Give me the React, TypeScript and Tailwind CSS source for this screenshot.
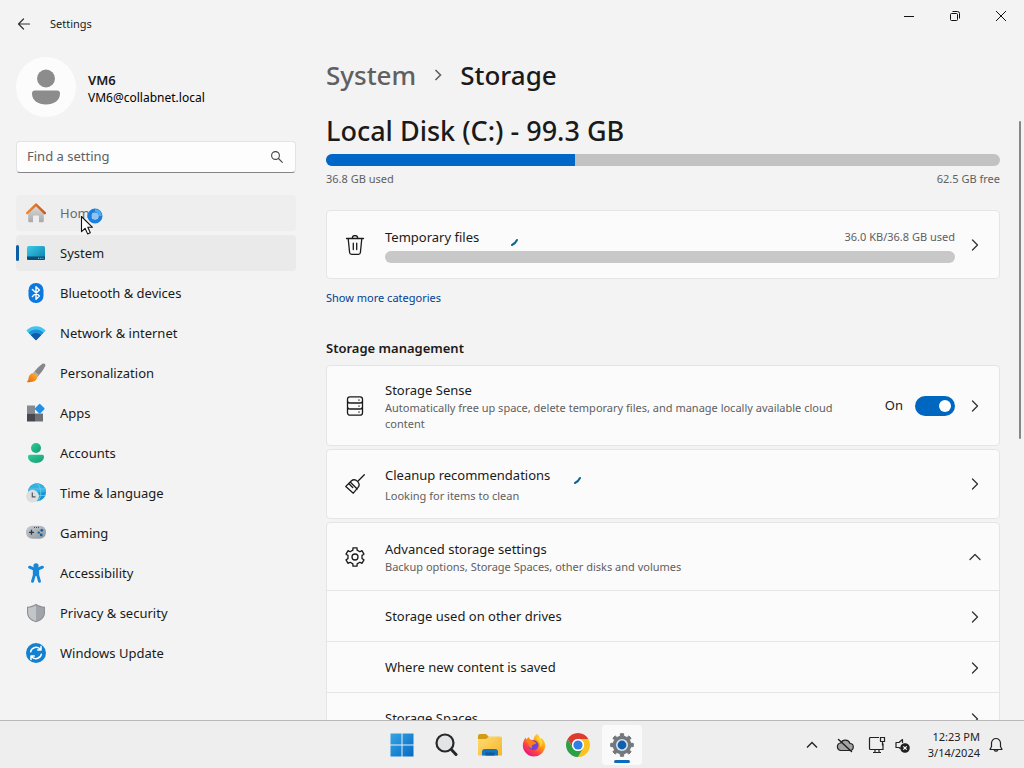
import type { ReactNode } from 'react'

// Closed outline of a cog wheel, one tooth pointing straight up
function gearPath(teeth: number, outer: number, inner: number, spread: number) {
  const step = (Math.PI * 2) / teeth
  const points: string[] = []
  const at = (r: number, a: number) =>
    `${(12 + r * Math.sin(a)).toFixed(2)} ${(12 - r * Math.cos(a)).toFixed(2)}`
  for (let i = 0; i < teeth; i++) {
    const a = i * step
    points.push(
      at(inner, a - step * spread * 1.35),
      at(outer, a - step * spread),
      at(outer, a + step * spread),
      at(inner, a + step * spread * 1.35),
    )
  }
  return `M${points.join('L')}Z`
}

/* ========== NAV ICONS ========== */

function HomeIcon() {
  return (
    <svg viewBox="0 0 20 20" className="size-5">
      <defs>
        <linearGradient id="home-wall" x1="0" y1="0" x2="0" y2="1">
          <stop offset="0" stopColor="#dedede" />
          <stop offset="1" stopColor="#a9a9a9" />
        </linearGradient>
        <linearGradient id="home-roof" x1="0" y1="0" x2="1" y2="0">
          <stop offset="0" stopColor="#f08a2c" />
          <stop offset="1" stopColor="#c8561b" />
        </linearGradient>
      </defs>
      <path
        d="M10 2 2.2 9.4V18a1.2 1.2 0 0 0 1.2 1.2H7V13.5a1 1 0 0 1 1-1h4a1 1 0 0 1 1 1v5.7h3.6a1.2 1.2 0 0 0 1.2-1.2V9.4Z"
        fill="url(#home-wall)"
      />
      <path
        d="M1.2 10.2 10 1.6l8.8 8.6"
        fill="none"
        stroke="url(#home-roof)"
        strokeWidth="2.4"
        strokeLinecap="round"
        strokeLinejoin="round"
      />
    </svg>
  )
}

function SystemIcon() {
  return (
    <svg viewBox="0 0 20 20" className="size-5">
      <defs>
        <linearGradient id="system-screen" x1="0" y1="0" x2="1" y2="1">
          <stop offset="0" stopColor="#3ccbe8" />
          <stop offset="1" stopColor="#0a7fae" />
        </linearGradient>
      </defs>
      <rect x="1" y="3" width="18" height="14" rx="1.6" fill="url(#system-screen)" />
      <path d="M1 13.6h18v1.8a1.6 1.6 0 0 1-1.6 1.6H2.6A1.6 1.6 0 0 1 1 15.4Z" fill="#0b4f78" />
      <path d="M12 15.3h1.2M14.2 15.3h1.2M16.4 15.3h1" stroke="#9adcf0" strokeWidth="0.9" />
    </svg>
  )
}

function BluetoothIcon() {
  return (
    <svg viewBox="0 0 20 20" className="size-5">
      <rect x="2.5" y="0" width="15" height="20" rx="7.2" fill="#0c78e0" />
      <path
        d="m6.4 6.6 7 6.5-3.4 3.2V3.7l3.4 3.2-7 6.5"
        fill="none"
        stroke="#fff"
        strokeWidth="1.4"
        strokeLinejoin="round"
        strokeLinecap="round"
      />
    </svg>
  )
}

function NetworkIcon() {
  return (
    <svg viewBox="0 0 20 20" className="size-5">
      <defs>
        <clipPath id="wifi-fan">
          <path d="M.3 7.5C5.8 1.8 14.2 1.8 19.7 7.5L10.6 16.8a.8.8 0 0 1-1.2 0Z" />
        </clipPath>
      </defs>
      <g clipPath="url(#wifi-fan)">
        <rect width="20" height="20" fill="#41c4ef" />
        <circle cx="10" cy="17" r="10.5" fill="#1b93dc" />
        <circle cx="10" cy="17" r="7" fill="#1259a8" />
      </g>
    </svg>
  )
}

function BrushIcon() {
  return (
    <svg viewBox="0 0 20 20" className="size-5">
      <defs>
        <linearGradient id="brush-tip" x1="1" y1="0" x2="0" y2="1">
          <stop offset="0" stopColor="#ffb53a" />
          <stop offset="1" stopColor="#e2640c" />
        </linearGradient>
      </defs>
      <path d="M16.4.8c1.5-1 3.6.5 2.8 2.3-1.7 3.8-4.4 7.3-7.6 10.6L7.4 9.9C10.3 6.2 13 3.3 16.4.8Z" fill="#85878c" />
      <path d="m8.8 8.3 4.3 3.7-1.9 2-4.2-3.8Z" fill="#a9abb0" />
      <path d="M7.2 10c2.1-.3 4.500 2.200 4.100 4.300C10.700 18 6 20 .6 19c1.600-1 1.700-2.200 2-4.200.4-2.600 2.300-4.600 4.600-4.800Z" fill="url(#brush-tip)" />
    </svg>
  )
}

function AppsIcon() {
  return (
    <svg viewBox="0 0 20 20" className="size-5">
      <path d="M1 2.5h8v8H1z" fill="#858a8f" />
      <path d="M1 10.5h8v8H1z" fill="#45484c" />
      <path d="M9 10.5h8v8H9z" fill="#6c7176" />
      <rect x="10" y="2" width="7.4" height="7.4" rx="1" transform="rotate(45 13.7 5.7)" fill="#1f8fe8" />
    </svg>
  )
}

function AccountsIcon() {
  return (
    <svg viewBox="0 0 20 20" className="size-5">
      <defs>
        <linearGradient id="account-green" x1="0" y1="0" x2="1" y2="1">
          <stop offset="0" stopColor="#2ecf98" />
          <stop offset="1" stopColor="#169a72" />
        </linearGradient>
      </defs>
      <circle cx="10" cy="5" r="5" fill="url(#account-green)" />
      <path d="M3.8 11.8h12.4A1.8 1.8 0 0 1 18 13.600C18 17.500 14.500 20 10 20s-8-2.500-8-6.400a1.800 1.800 0 0 1 1.800-1.800Z" fill="url(#account-green)" />
    </svg>
  )
}

function TimeIcon() {
  return (
    <svg viewBox="0 0 20 20" className="size-5">
      <circle cx="11" cy="9.2" r="9" fill="#1797cf" />
      <path d="M11 .2a9 9 0 0 1 9 9H3C3 4 6.5.2 11 .2Z" fill="#35b3e0" />
      <path d="M11 .2c4.5 4 5 13 1 18M2.500 6h17M3 12.500h16.300" fill="none" stroke="#77d3ef" strokeWidth="0.7" />
      <circle cx="6.5" cy="13.2" r="6.4" fill="#dcdfe2" />
      <path d="M6.3 9.6v4.200h3.200" fill="none" stroke="#53585d" strokeWidth="1.2" />
    </svg>
  )
}

function GamingIcon() {
  return (
    <svg viewBox="0 0 20 20" className="size-5">
      <defs>
        <linearGradient id="pad-body" x1="0" y1="0" x2="1" y2="1">
          <stop offset="0" stopColor="#c7ccd1" />
          <stop offset="1" stopColor="#8d979f" />
        </linearGradient>
      </defs>
      <rect x="0" y="2.8" width="20" height="13" rx="6.2" fill="url(#pad-body)" />
      <path d="M3 9.3h5M5.5 6.8v5" stroke="#34393e" strokeWidth="1.3" />
      <path d="M8 4.4h1M10 4.4h1M12 4.4h1" stroke="#41474d" strokeWidth="1" />
      <circle cx="15.8" cy="7.3" r="1.4" fill="#1e5d97" />
      <circle cx="12.8" cy="9.6" r="1.2" fill="#1e5d97" />
      <circle cx="15.2" cy="11.9" r="1.4" fill="#1e5d97" />
    </svg>
  )
}

function AccessibilityIcon() {
  return (
    <svg viewBox="0 0 20 20" className="size-5">
      <circle cx="10" cy="2.8" r="2.6" fill="#1687d9" />
      <path
        d="M3.6 4.2 8.2 6.2h3.6l4.6-2M8.3 7v5.2L6.5 18.3M11.7 7v5.2l1.8 6.1"
        fill="none"
        stroke="#1687d9"
        strokeWidth="2.9"
        strokeLinecap="round"
        strokeLinejoin="round"
      />
      <path d="M8 6.5h4v6.5H8z" fill="#1687d9" />
    </svg>
  )
}

function ShieldIcon() {
  return (
    <svg viewBox="0 0 20 20" className="size-5">
      <path d="M10 .8c2.7 1.9 5.5 2.7 9 2.9v5.7c0 4.800-3.300 8-9 9.900-5.700-1.900-9-5.100-9-9.900V3.700C4.500 3.500 7.300 2.700 10 .8Z" fill="#8c9094" />
      <path d="M10 2.2c2.5 1.6 4.9 2.3 7.900 2.500v4.800c0 4.100-2.800 6.900-7.900 8.600Z" fill="#a1a5a9" />
      <path d="M10 2.2C7.5 3.8 5.1 4.500 2.100 4.700v4.800c0 4.100 2.800 6.900 7.900 8.600Z" fill="#c3c6c9" />
    </svg>
  )
}

function UpdateIcon() {
  return (
    <svg viewBox="0 0 20 20" className="size-5">
      <circle cx="10" cy="10" r="10" fill="#1480d0" />
      <path
        d="M4.6 8.8a5.6 5.6 0 0 1 10-2.2M15.4 11.2a5.6 5.6 0 0 1-10 2.2M15 3.6v3.3h-3.3M5 16.4v-3.3h3.3"
        fill="none"
        stroke="#fff"
        strokeWidth="1.5"
        strokeLinecap="round"
        strokeLinejoin="round"
      />
    </svg>
  )
}

/* ========== LINE ICONS ========== */

function LineIcon({ d }: { d: string }) {
  return (
    <svg
      viewBox="0 0 20 20"
      className="size-5 shrink-0"
      fill="none"
      stroke="currentColor"
      strokeWidth="1.3"
      strokeLinecap="round"
      strokeLinejoin="round"
      aria-hidden
    >
      <path d={d} />
    </svg>
  )
}

const trash = 'M1.5 3.500h17M7.300 3.300a2.700 2.700 0 0 1 5.400 0M3.200 3.500l1.400 14a2 2 0 0 0 2 1.800h6.800a2 2 0 0 0 2-1.800l1.400-14M8.300 8.200v6.300M11.700 8.200v6.300'
const drawers = 'M5 .8h10A2.500 2.500 0 0 1 17.500 3.300v13.400a2.500 2.500 0 0 1-2.500 2.500H5a2.500 2.500 0 0 1-2.500-2.500V3.300A2.500 2.500 0 0 1 5 .8ZM2.500 4.500a2.500 2.500 0 0 0 2.500 2.500h10a2.500 2.500 0 0 0 2.500-2.500M2.500 10.500A2.500 2.500 0 0 0 5 13h10a2.500 2.500 0 0 0 2.500-2.500M14 4v.2M14 10v.2M14 16v.2'
const broom = 'M19.3.8 12.600 7.500M.8 12.400 6.200 7c1.900-1.600 4.500-1.400 6.300.4 1.800 1.800 2 4.400.4 6.300L8.300 19.200ZM5.200 8l7 7M3.700 9.500l4 4'

function GearLineIcon() {
  return (
    <svg
      viewBox="2 2 20 20"
      className="size-5 shrink-0"
      fill="none"
      stroke="currentColor"
      strokeWidth="1.3"
      strokeLinejoin="round"
      aria-hidden
    >
      <path d={gearPath(6, 9.4, 7.2, 0.21)} />
      <circle cx="12" cy="12" r="3" />
    </svg>
  )
}

function Chevron({ up = false }: { up?: boolean }) {
  return (
    <svg
      viewBox="0 0 16 16"
      className="size-4 shrink-0"
      fill="none"
      stroke="#333"
      strokeWidth="1.3"
      strokeLinecap="round"
      strokeLinejoin="round"
      aria-hidden
    >
      <path d={up ? 'm3 10.5 5-5 5 5' : 'm5.5 3 5 5-5 5'} />
    </svg>
  )
}

// Short arc of the indeterminate progress ring
function ProgressArc() {
  return (
    <svg viewBox="0 0 20 20" className="size-5" fill="none" aria-hidden>
      <path d="M18 13q-1.700 3.500-5 5" stroke="#0f6296" strokeWidth="2" strokeLinecap="round" />
    </svg>
  )
}

/* ========== SIDEBAR ========== */

type NavItem = { label: string; icon: ReactNode }

const navItems: NavItem[] = [
  { label: 'Home', icon: <HomeIcon /> },
  { label: 'System', icon: <SystemIcon /> },
  { label: 'Bluetooth & devices', icon: <BluetoothIcon /> },
  { label: 'Network & internet', icon: <NetworkIcon /> },
  { label: 'Personalization', icon: <BrushIcon /> },
  { label: 'Apps', icon: <AppsIcon /> },
  { label: 'Accounts', icon: <AccountsIcon /> },
  { label: 'Time & language', icon: <TimeIcon /> },
  { label: 'Gaming', icon: <GamingIcon /> },
  { label: 'Accessibility', icon: <AccessibilityIcon /> },
  { label: 'Privacy & security', icon: <ShieldIcon /> },
  { label: 'Windows Update', icon: <UpdateIcon /> },
]

const navStyle: Record<string, string> = {
  Home: 'bg-[#eeeeee] text-[#6a6a6a]',
  System: 'bg-[#eaeaea]',
}

function BusyPointer() {
  return (
    <svg viewBox="0 0 28 30" className="absolute left-16 top-3 z-10 h-[30px] w-7 pointer-events-none" aria-hidden>
      <circle cx="15" cy="9" r="5.5" fill="none" stroke="#1c7fe0" strokeWidth="4" />
      <circle cx="15" cy="9" r="3.3" fill="#8fc4f2" />
      <path d="M15 3.5a5.5 5.5 0 0 1 5.5 5.5" fill="none" stroke="#4fb0f5" strokeWidth="2.5" />
      <path
        d="M1.5 9.5v15.2l3.6-3.4 2.5 5.6 2.7-1.2-2.5-5.4h4.7Z"
        fill="#fff"
        stroke="#111"
        strokeWidth="1.1"
        strokeLinejoin="round"
      />
    </svg>
  )
}

function Sidebar() {
  return (
    <aside className="w-[280px] shrink-0 pt-[9px]">
      <div className="flex items-center gap-3">
        <div className="size-[60px] rounded-full bg-[#fcfcfc] flex items-center justify-center">
          <svg viewBox="0 0 28 36" className="h-9 w-7" fill="#8c8c8c" aria-hidden>
            <circle cx="14" cy="9.5" r="9" />
            <path d="M3 21.5h22a3 3 0 0 1 3 3C28 31.500 22 35.500 14 35.500S0 31.500 0 24.500a3 3 0 0 1 3-3Z" />
          </svg>
        </div>
        <div className="pt-0.5">
          <p className="text-[13px] leading-5 font-semibold">VM6</p>
          <p className="text-xs leading-4 text-black">VM6@collabnet.local</p>
        </div>
      </div>

      <label className="mt-6 flex h-8 items-center rounded border border-[#e3e3e3] border-b-[#868686] bg-[#fdfdfd] px-2.5">
        <input
          type="text"
          aria-label="Find a setting"
          placeholder="Find a setting"
          className="min-w-0 flex-1 bg-transparent text-[13px] outline-none placeholder:text-[#606060]"
        />
        <svg viewBox="0 0 16 16" className="size-4" fill="none" stroke="#444" strokeWidth="1.1" strokeLinecap="round" aria-hidden>
          <circle cx="6.5" cy="6.5" r="3.9" />
          <path d="m9.5 9.5 3.8 3.8" />
        </svg>
      </label>

      <nav className="mt-[22px] flex flex-col gap-1">
        {navItems.map(({ label, icon }) => (
          <button
            key={label}
            className={`relative flex h-9 items-center gap-3.5 rounded px-2.5 text-left text-[13px] ${navStyle[label] ?? ''}`}
          >
            {label === 'System' && (
              <span className="absolute left-0 top-2.5 h-4 w-[3px] rounded-full bg-[#0a5ea8]" />
            )}
            {icon}
            <span className="pt-0.5">{label}</span>
            {label === 'Home' && <BusyPointer />}
          </button>
        ))}
      </nav>
    </aside>
  )
}

/* ========== STORAGE PAGE ========== */

const card = 'rounded border border-[#e5e5e5] bg-[#fbfbfb]'
const row = 'flex w-full items-center gap-5 pl-[18px] pr-4 text-left'
const subRows = ['Storage used on other drives', 'Where new content is saved', 'Storage Spaces']

function Storage() {
  return (
    <main className="relative min-w-0 flex-1 overflow-hidden pl-[30px] pr-6 pt-[9px]">
      <h1 className="flex items-center gap-4 text-[26px] leading-9 font-medium">
        <a href="#system" className="text-[#606060]">System</a>
        <svg viewBox="0 0 12 16" className="h-4 w-3" fill="none" stroke="#606060" strokeWidth="1.6" aria-hidden>
          <path d="m3.5 3 5 5-5 5" />
        </svg>
        <span>Storage</span>
      </h1>

      <h2 className="mt-5 text-[27px] leading-9 font-medium">Local Disk (C:) - 99.3 GB</h2>
      <div className="mt-[5px] h-3 overflow-hidden rounded-full bg-[#c2c2c2]">
        <div className="h-full w-[37%] bg-[#0067c8]" />
      </div>
      <div className="mt-[5px] flex justify-between text-[11px] leading-4 text-[#606060]">
        <span>36.8 GB used</span>
        <span>62.5 GB free</span>
      </div>

      <button className={`${card} ${row} mt-[23px] h-[69px]`}>
        <LineIcon d={trash} />
        <div className="flex min-w-0 flex-1 items-center gap-3">
          <div className="min-w-0 flex-1">
            <div className="flex items-center leading-5">
              <span className="text-[13px]">Temporary files</span>
              <span className="ml-5"><ProgressArc /></span>
              <span className="ml-auto text-[11px] text-[#606060]">36.0 KB/36.8 GB used</span>
            </div>
            <div className="mt-1 h-3 rounded-full bg-[#c8c8c8]" />
          </div>
          <Chevron />
        </div>
      </button>
      <a href="#categories" className="mt-2.5 block w-fit text-[11px] leading-[18px] text-[#003e92]">
        Show more categories
      </a>

      <h3 className="mt-[31px] text-[13px] leading-5 font-semibold">Storage management</h3>

      <div className="mt-[7px] flex flex-col gap-[3px]">
        <div className={`${card} ${row} h-[81px]`}>
          <LineIcon d={drawers} />
          <div className="min-w-0 flex-1">
            <p className="text-[13px] leading-5">Storage Sense</p>
            <p className="text-[11px] leading-4 text-[#606060]">
              Automatically free up space, delete temporary files, and manage locally available cloud content
            </p>
          </div>
          <div className="flex items-center gap-3">
            <label htmlFor="sense" className="text-[13px]">On</label>
            <span className="relative flex">
              <input
                id="sense"
                type="checkbox"
                role="switch"
                defaultChecked
                className="peer h-5 w-10 appearance-none rounded-full bg-[#8a8a8a] checked:bg-[#0067c0]"
              />
              <span className="pointer-events-none absolute left-1 top-1 size-3 rounded-full bg-white peer-checked:left-6" />
            </span>
            <Chevron />
          </div>
        </div>

        <button className={`${card} ${row} h-[70px]`}>
          <LineIcon d={broom} />
          <div className="flex-1">
            <div className="flex items-center gap-3 leading-5">
              <span className="text-[13px]">Cleanup recommendations</span>
              <ProgressArc />
            </div>
            <p className="mt-[3px] text-[11px] leading-4 text-[#606060]">Looking for items to clean</p>
          </div>
          <Chevron />
        </button>

        <div className={card}>
          <button className={`${row} h-[67px]`}>
            <GearLineIcon />
            <div className="flex-1">
              <p className="text-[13px] leading-5">Advanced storage settings</p>
              <p className="text-[11px] leading-4 text-[#606060]">
                Backup options, Storage Spaces, other disks and volumes
              </p>
            </div>
            <Chevron up />
          </button>
          {subRows.map((label) => (
            <button
              key={label}
              className="flex h-[51px] w-full items-center justify-between border-t border-[#e5e5e5] pl-[58px] pr-4 pt-0.5 text-[13px]"
            >
              <span>{label}</span>
              <Chevron />
            </button>
          ))}
        </div>
      </div>

      {/* Scroll thumb */}
      <div className="absolute right-[3px] top-[73px] h-[318px] w-0.5 rounded-full bg-[#868686]" />
    </main>
  )
}

/* ========== TASKBAR ========== */

function StartLogo() {
  return (
    <svg viewBox="0 0 24 24" className="size-6" aria-hidden>
      <defs>
        <linearGradient id="start-blue" x1="0" y1="0" x2="24" y2="24" gradientUnits="userSpaceOnUse">
          <stop offset="0" stopColor="#35a7e6" />
          <stop offset="1" stopColor="#0668c4" />
        </linearGradient>
      </defs>
      <path d="M.5.5h11v11H.5zM12.5.5h11v11h-11zM.5 12.5h11v11H.5zM12.5 12.5h11v11h-11z" fill="url(#start-blue)" />
    </svg>
  )
}

function SearchLogo() {
  return (
    <svg viewBox="0 0 24 24" className="size-6" fill="none" stroke="#26282b" aria-hidden>
      <circle cx="11" cy="10" r="8.5" fill="#e2e4e6" strokeWidth="2.2" />
      <path d="m17.3 16.5 4.7 5" strokeWidth="3" strokeLinecap="round" />
    </svg>
  )
}

function FolderLogo() {
  return (
    <svg viewBox="0 0 24 24" className="size-6" aria-hidden>
      <defs>
        <linearGradient id="folder-face" x1="0" y1="0" x2="1" y2="1">
          <stop offset="0" stopColor="#ffdc70" />
          <stop offset="1" stopColor="#f5b52e" />
        </linearGradient>
      </defs>
      <path d="M0 3a2 2 0 0 1 2-2h6l3 3-3 3H0Z" fill="#d59a14" />
      <path d="M0 6h8l3-2.500h11.500A1.500 1.500 0 0 1 24 5v17.500H0Z" fill="url(#folder-face)" />
      <path d="M4 22.500V19a3 3 0 0 1 3-3h10a3 3 0 0 1 3 3v3.500Z" fill="#1674bd" />
      <path d="M7.500 19.500h9v3h-9z" fill="#0d5a9c" />
    </svg>
  )
}

function FirefoxLogo() {
  return (
    <svg viewBox="0 0 24 24" className="size-6" aria-hidden>
      <defs>
        <linearGradient id="fox-body" x1="20" y1="2" x2="5" y2="22" gradientUnits="userSpaceOnUse">
          <stop offset="0" stopColor="#ffe03a" />
          <stop offset="0.4" stopColor="#ff980e" />
          <stop offset="0.7" stopColor="#ff4047" />
          <stop offset="1" stopColor="#e31587" />
        </linearGradient>
      </defs>
      <path
        d="M15.200.8c1.500 1.600 2.400 3.100 2.600 4.500l2.400.5c2 2 3.100 4.500 3.100 7.200A11.200 11.200 0 0 1 12 23.500 11.200 11.200 0 0 1 .8 12.600C.8 9.500 1.900 6.500 3.600 4.400l1 2.200L6.500 4l1.800 2.600 3.200.3c.2-2.600 1.600-4.800 3.700-6.100Z"
        fill="url(#fox-body)"
      />
      <circle cx="11.5" cy="12.3" r="5" fill="#7340d9" />
      <path d="M3.800 7.500c2.500-1.200 5.300-.7 7.700.8 1.500 1 2.700 1 3 1.800-1 1.600-3 1-4.400 2.400-.8.800-.5 2 .3 2.700-2.400 0-4.500-2.500-4.200-5Z" fill="#ff7c1f" />
      <path d="M14 5.500c3.600 2 5 5.600 3.800 9 2-1.200 2.800-4 2.400-6.500L17.500 4.500Z" fill="#ffd531" />
    </svg>
  )
}

function ChromeLogo() {
  return (
    <svg viewBox="0 0 24 24" className="size-6" aria-hidden>
      <path d="M1.61 6A12 12 0 0 1 22.39 6H12A6 6 0 0 0 6.8 15Z" fill="#df3a2e" />
      <path d="M22.39 6A12 12 0 0 1 12 24L17.2 15A6 6 0 0 0 12 6Z" fill="#fbc31c" />
      <path d="M12 24A12 12 0 0 1 1.61 6L6.8 15A6 6 0 0 0 17.2 15Z" fill="#2c9f47" />
      <circle cx="12" cy="12" r="6" fill="#fff" />
      <circle cx="12" cy="12" r="4.6" fill="#2f7de9" />
    </svg>
  )
}

function SettingsLogo() {
  return (
    <svg viewBox="0 0 24 24" className="size-6" aria-hidden>
      <path d={gearPath(8, 11.4, 9, 0.18)} fill="#72777c" stroke="#72777c" strokeLinejoin="round" />
      <circle cx="12" cy="12" r="6" fill="#d5e2ee" />
      <circle cx="12" cy="12" r="4.4" fill="#0f5fae" />
    </svg>
  )
}

const pinned: NavItem[] = [
  { label: 'Start', icon: <StartLogo /> },
  { label: 'Search', icon: <SearchLogo /> },
  { label: 'File Explorer', icon: <FolderLogo /> },
  { label: 'Firefox', icon: <FirefoxLogo /> },
  { label: 'Chrome', icon: <ChromeLogo /> },
  { label: 'Settings', icon: <SettingsLogo /> },
]

function Taskbar() {
  return (
    <footer className="grid h-12 shrink-0 grid-cols-[1fr_auto_1fr] items-center border-t border-[#b9b9b9] bg-[#eeeeee]">
      <span />
      <div className="flex gap-1">
        {pinned.map(({ label, icon }) => (
          <button
            key={label}
            aria-label={label}
            className={`relative flex size-10 items-center justify-center rounded ${label === 'Settings' ? 'bg-[#fafafa]' : ''}`}
          >
            {icon}
            {label === 'Settings' && (
              <span className="absolute bottom-0.5 h-[3px] w-4 rounded-full bg-[#0f6cbd]" />
            )}
          </button>
        ))}
      </div>

      <div className="flex items-center justify-end pr-5 text-[#222]">
        <button aria-label="Show hidden icons" className="mr-4">
          <svg viewBox="0 0 16 16" className="size-4" fill="none" stroke="currentColor" strokeWidth="1.4">
            <path d="m3 10.5 5-5 5 5" />
          </svg>
        </button>
        <button aria-label="Cloud sync off" className="mr-3.5">
          <svg viewBox="0 0 18 16" className="h-4 w-[18px]" fill="#a4a4a4" stroke="currentColor" strokeWidth="1.2" strokeLinecap="round">
            <path d="M4.500 13.500h9a3.500 3.500 0 0 0 .5-7A5 5 0 0 0 4.700 6 3.800 3.800 0 0 0 4.500 13.500Z" />
            <path d="m2.500 2.500 13 12" strokeWidth="1.5" />
          </svg>
        </button>
        <button aria-label="Network and volume" className="mr-[18px] flex items-center gap-2">
          <svg viewBox="0 0 18 18" className="size-[18px]" fill="none" stroke="currentColor" strokeWidth="1.2">
            <path d="M11 1.500H2.500a1 1 0 0 0-1 1v10a1 1 0 0 0 1 1H15V7.500M5 16.500h8M7 13.500v3M11 13.500v3" />
            <path d="M12.500 1.500h4v4h-4zM14.500 5.500v4" />
          </svg>
          <svg viewBox="0 0 16 16" className="size-4" fill="none" stroke="currentColor" strokeWidth="1.2" strokeLinejoin="round">
            <path d="M8.500 6V2.500L5 5.500H2v5h3l1.500 1.300" />
            <circle cx="11" cy="11" r="4.2" fill="#222" />
            <path d="m9.300 9.300 3.400 3.400M12.700 9.300l-3.400 3.400" stroke="#fff" />
          </svg>
        </button>
        <time className="text-right text-[11px] leading-4">
          12:23 PM
          <br />
          3/14/2024
        </time>
        <button aria-label="Notifications" className="ml-2">
          <svg viewBox="0 0 16 16" className="size-4" fill="none" stroke="currentColor" strokeWidth="1.2" strokeLinejoin="round" strokeLinecap="round">
            <path d="M8 1.500A4.500 4.500 0 0 0 3.500 6v3.500L2 12.500h12l-1.500-3V6A4.500 4.500 0 0 0 8 1.500ZM6.300 13a1.800 1.800 0 0 0 3.400 0" />
          </svg>
        </button>
      </div>
    </footer>
  )
}

function TitleBar() {
  return (
    <header className="flex h-12 shrink-0 items-start justify-between">
      <div className="flex h-full items-center gap-[18px] pl-4">
        <button aria-label="Back">
          <svg viewBox="0 0 16 16" className="size-4" fill="none" stroke="#333" strokeWidth="1.2" strokeLinecap="round" strokeLinejoin="round">
            <path d="M13.500 8h-11M7.500 3l-5 5 5 5" />
          </svg>
        </button>
        <span className="text-[11px]">Settings</span>
      </div>
      <div className="flex">
        <button aria-label="Minimize" className="flex h-8 w-[46px] items-center justify-center">
          <svg viewBox="0 0 10 10" className="size-2.5" stroke="#111"><path d="M0 5.5h10" /></svg>
        </button>
        <button aria-label="Restore" className="flex h-8 w-[46px] items-center justify-center">
          <svg viewBox="0 0 10 10" className="size-2.5" fill="none" stroke="#111">
            <rect x="0.5" y="2.5" width="7" height="7" rx="1" />
            <path d="M2.5.5h5a2 2 0 0 1 2 2v5" />
          </svg>
        </button>
        <button aria-label="Close" className="flex h-8 w-[46px] items-center justify-center">
          <svg viewBox="0 0 10 10" className="size-2.5" stroke="#111"><path d="m0 0 10 10M10 0 0 10" /></svg>
        </button>
      </div>
    </header>
  )
}

export default function App() {
  return (
    <div className="flex h-screen flex-col overflow-hidden bg-[#f3f3f3] font-['Noto_Sans','Open_Sans',sans-serif] text-[#1a1a1a]">
      <TitleBar />
      <div className="flex min-h-0 flex-1 pl-4">
        <Sidebar />
        <Storage />
      </div>
      <Taskbar />
    </div>
  )
}
